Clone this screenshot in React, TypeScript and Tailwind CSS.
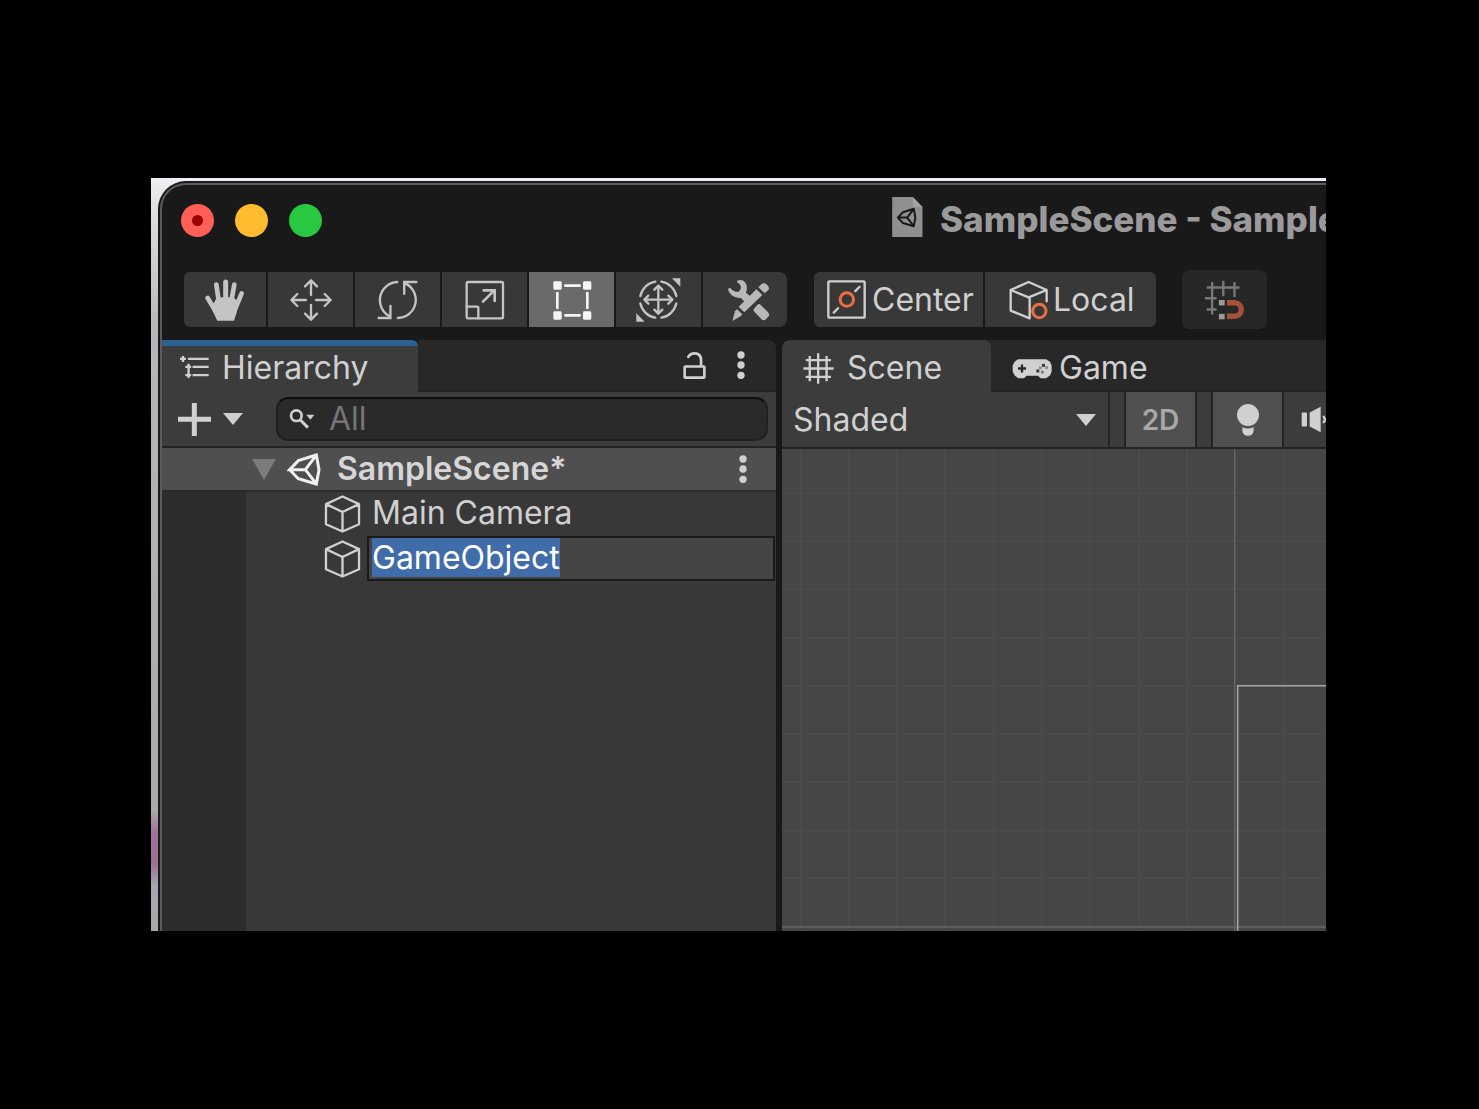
import { useEffect, useRef, type ReactNode } from "react";

type IconProps = { box: string; className: string; children: ReactNode };

function Icon({ box, className, children }: IconProps) {
  return (
    <svg
      viewBox={box}
      className={`shrink-0 ${className}`}
      fill="none"
      stroke="currentColor"
      strokeLinecap="round"
      strokeLinejoin="round"
      strokeWidth={7}
      aria-hidden="true"
    >
      {children}
    </svg>
  );
}

function HandIcon() {
  return (
    <Icon box="180 318 120 132" className="h-[44px] w-[40px]">
      <g strokeWidth={14}>
        <path d="M188 378 L210 415" />
        <path d="M214 338 L222 392" />
        <path d="M242 330 V392" strokeWidth={15} />
        <path d="M268 338 L258 392" />
        <path d="M290 364 L273 405" />
      </g>
      <path
        d="M194 394 L206 394 L216 376 H266 L282 394 Q276 422 267 446 H217 Q206 426 194 394 Z"
        fill="currentColor"
        stroke="none"
      />
    </Icon>
  );
}

function MoveIcon() {
  return (
    <Icon box="434 322 132 132" className="size-[44px]">
      <path d="M500 373 V329 M482 347 L500 329 L518 347" />
      <path d="M500 403 V447 M482 429 L500 447 L518 429" />
      <path d="M485 388 H441 M459 370 L441 388 L459 406" />
      <path d="M515 388 H559 M541 370 L559 388 L541 406" />
    </Icon>
  );
}

function RotateIcon() {
  return (
    <Icon box="700 326 122 122" className="size-[41px]">
      <path d="M760 335 A54 54 0 0 0 738 437" />
      <path d="M762 442 A54 54 0 0 0 784 339" />
      <path d="M817 335 H781 V370" strokeLinejoin="miter" />
      <path d="M705 442 H740 V406" strokeLinejoin="miter" />
    </Icon>
  );
}

function ScaleIcon() {
  return (
    <Icon box="77 59 120 120" className="size-[40px]">
      <rect x="82" y="65" width="109" height="109" rx="4" />
      <path d="M82 139 H114 Q117 139 117 142 V174" />
      <path d="M131 124 L165 90" strokeWidth={8} />
      <path d="M133 90 H166 V122" strokeWidth={8} strokeLinejoin="miter" />
    </Icon>
  );
}

function RectIcon() {
  return (
    <Icon box="336 57 120 120" className="size-[40px]">
      <g fill="currentColor" stroke="none">
        <rect x="340" y="61" width="25" height="25" rx="4" />
        <rect x="429" y="61" width="25" height="25" rx="4" />
        <rect x="340" y="151" width="25" height="25" rx="4" />
        <rect x="429" y="151" width="25" height="25" rx="4" />
      </g>
      <path
        d="M376 74 H419 M376 163 H419 M352 96 V141 M442 96 V141"
        strokeWidth={8}
      />
    </Icon>
  );
}

function TransformIcon() {
  return (
    <Icon box="588 50 141 138" className="h-[46px] w-[47px]">
      <path d="M649 64 A55 55 0 0 0 604 107 M667 64 A55 55 0 0 1 712 107 M649 172 A55 55 0 0 1 604 129 M667 172 A55 55 0 0 0 712 129" />
      <path d="M618 118 H698 M658 78 V158" />
      <path d="M646 88 L658 76 L670 88 M646 148 L658 160 L670 148 M628 106 L616 118 L628 130 M688 106 L700 118 L688 130" />
      <g fill="currentColor" stroke="none">
        <path d="M699 54 H724 V79 Z" />
        <path d="M592 159 V184 H617 Z" />
      </g>
    </Icon>
  );
}

function ToolsIcon() {
  return (
    <Icon box="855 52 132 132" className="size-[44px]">
      <g fill="currentColor" stroke="none">
        <path d="M889 60 Q898 56 907 60 Q918 68 918 84 L915 96 Q924 103 931 110 L914 126 L900 112 Q884 114 872 104 Q862 96 861 84 L868 82 Q873 91 884 93 L893 93 Q902 84 899 76 Q896 68 888 65 Z" />
        <path d="M938 145 L952 130 Q956 129 960 134 L980 153 Q986 160 984 166 L972 178 Q965 180 960 174 L938 151 Z" />
        <path d="M893 138 L946 86 L964 103 L910 155 Z" />
        <path d="M952 80 L962 70 Q970 65 978 72 Q986 79 983 87 L971 98 Z" />
        <path d="M888 146 L904 161 L900 166 L874 181 L882 152 Z" />
      </g>
    </Icon>
  );
}

function CenterIcon() {
  return (
    <Icon box="82 330 116 116" className="size-[39px]">
      <rect x="86" y="334" width="108" height="108" rx="3" />
      <path d="M102 427 L115 414 M166 363 L179 350" strokeWidth={7} />
      <circle cx="141" cy="388" r="20" stroke="#ea6f47" strokeWidth={9} />
    </Icon>
  );
}

function LocalIcon() {
  return (
    <Icon box="628 328 120 120" className="size-[40px]">
      <path d="M741 392 V358 L687 334 L633 358 V420 L690 443 V380 M633 358 L687 380 L741 358" />
      <circle cx="719" cy="421" r="20" stroke="#ea6f47" strokeWidth={9} />
    </Icon>
  );
}

function SnapIcon() {
  return (
    <Icon box="376 330 118 118" className="size-[40px]">
      <g stroke="#787878" strokeLinecap="butt">
        <path d="M381 352 H478 M376 384 H410 M381 417 H410 M397 336 V432 M430 332 V378 M463 336 V380" />
      </g>
      <g fill="#9b9b9b" stroke="none">
        <rect x="417" y="389" width="17" height="16" />
        <rect x="417" y="430" width="17" height="16" />
      </g>
      <path
        d="M441 397 H463 A20 20 0 0 1 463 437 H441"
        stroke="#a4523a"
        strokeWidth={16}
        strokeLinecap="butt"
      />
    </Icon>
  );
}

const logoPath =
  "M465 88 H418 L444 61 L498 44 L506 88 L498 131 L444 115 L418 88 M465 88 L497 46 M465 88 L497 129";

function FileIcon() {
  return (
    <Icon box="275 81 92 120" className="h-[40px] w-[31px]">
      <path d="M275 83 Q275 81 277 81 H337 L366 111 V201 H275 Z" fill="#8f8f8f" stroke="none" />
      <path d="M337 81 L366 111 H341 Q337 111 337 107 Z" fill="#a4a4a4" stroke="none" />
      <g transform="translate(41 90) scale(0.6)" stroke="#191919" strokeWidth={10}>
        <path d={logoPath} />
      </g>
    </Icon>
  );
}

function LogoIcon() {
  return (
    <Icon box="410 38 102 99" className="h-[33px] w-[34px] text-[#f0f0f0]">
      <path d={logoPath} strokeWidth={9} strokeLinejoin="miter" />
    </Icon>
  );
}

function HierarchyIcon() {
  return (
    <Icon box="86 54 92 76" className="h-[25px] w-[31px]">
      <path
        d="M112 69 H175 M126 93 H175 M126 118 H175 M88 69 H106 M97 60 V78 M104 93 H122 M104 118 H122 M114 84 V127"
        strokeLinecap="butt"
      />
      <circle cx="97" cy="69" r="2" />
      <circle cx="114" cy="93" r="2" />
      <circle cx="114" cy="118" r="2" />
    </Icon>
  );
}

function DownArrow() {
  return (
    <Icon box="219 236 60 36" className="h-[12px] w-[20px]">
      <path d="M219 236 H279 L249 272 Z" fill="currentColor" stroke="none" />
    </Icon>
  );
}

function PlusIcon() {
  return (
    <Icon box="85 202 99 99" className="size-[33px]">
      <path d="M85 251 H184 M134 202 V301" strokeWidth={15} strokeLinecap="butt" />
    </Icon>
  );
}

function SearchIcon() {
  return (
    <Icon box="417 226 78 60" className="h-[20px] w-[26px]">
      <circle cx="439" cy="246" r="16" strokeWidth={8} />
      <path d="M451 259 L474 282" strokeWidth={9} strokeLinecap="butt" />
      <path d="M469 243 H493 L481 258 Z" fill="currentColor" stroke="none" />
    </Icon>
  );
}

function LockIcon() {
  return (
    <Icon box="639 46 70 86" className="h-[29px] w-[23px]">
      <rect x="644" y="92" width="60" height="34" rx="2" strokeWidth={8} />
      <path d="M655 63 Q661 52 674 52 Q694 52 694 73 V90" strokeWidth={8} />
    </Icon>
  );
}

function DotsIcon() {
  return (
    <Icon box="801 47 24 84" className="h-[28px] w-[8px]">
      <g fill="currentColor" stroke="none">
        <circle cx="813" cy="59" r="11" />
        <circle cx="813" cy="89" r="11" />
        <circle cx="813" cy="120" r="11" />
      </g>
    </Icon>
  );
}

function GridIcon() {
  return (
    <Icon box="85 47 92 92" className="size-[31px]">
      <path
        d="M105 56 V131 M130 48 V138 M155 56 V131 M93 68 H168 M86 93 H176 M93 118 H168"
        strokeLinecap="butt"
      />
    </Icon>
  );
}

function GamepadIcon() {
  return (
    <Icon box="710 70 120 62" className="h-[21px] w-[40px]">
      <path
        d="M728 73 H812 L824 81 L829 92 V110 L824 122 L812 130 H796 L788 123 H754 L746 130 H729 L718 122 L712 110 V92 L718 81 Z"
        fill="currentColor"
        stroke="none"
      />
      <g stroke="#282828">
        <path d="M728 101 H752 M740 89 V113" strokeLinecap="butt" />
      </g>
      <g fill="#3a3a3a" stroke="none">
        <rect x="800" y="87" width="9" height="9" />
        <rect x="783" y="104" width="9" height="9" />
        <rect x="810" y="94" width="8" height="8" fill="#8a8a8a" />
        <rect x="791" y="95" width="8" height="8" fill="#8a8a8a" />
        <rect x="797" y="108" width="8" height="8" fill="#777777" />
      </g>
    </Icon>
  );
}

function BulbIcon() {
  return (
    <Icon box="710 203 66 96" className="h-[32px] w-[22px]">
      <g fill="currentColor" stroke="none">
        <circle cx="743" cy="236" r="33" />
        <path d="M726 273 Q743 280 760 273 V283 Q758 298 743 298 Q728 298 726 283 Z" />
      </g>
    </Icon>
  );
}

function SpeakerIcon() {
  return (
    <Icon box="904 208 96 80" className="h-[27px] w-[32px]">
      <g fill="currentColor" stroke="none">
        <rect x="906" y="227" width="16" height="42" rx="3" />
        <path d="M930 227 L963 210 V286 L930 269 Z" />
      </g>
      <path d="M972 240 Q979 248 972 256" />
    </Icon>
  );
}

function CubeIcon() {
  return (
    <Icon box="523 166 112 114" className="h-[38px] w-[37px]">
      <path d="M579 170 L629 193 V254 L579 276 L529 254 V193 Z M529 193 L579 217 L629 193 M579 217 V276" />
    </Icon>
  );
}

const tools = [
  { name: "Hand", icon: <HandIcon />, shape: "w-[82px] rounded-l-md bg-[#383838]" },
  { name: "Move", icon: <MoveIcon />, shape: "w-[85px] bg-[#383838]" },
  { name: "Rotate", icon: <RotateIcon />, shape: "w-[85px] bg-[#383838]" },
  { name: "Scale", icon: <ScaleIcon />, shape: "w-[85px] bg-[#383838]" },
  { name: "Rect", icon: <RectIcon />, shape: "w-[85px] bg-[#6a6a6a] text-[#f5f5f5]" },
  { name: "Transform", icon: <TransformIcon />, shape: "w-[85px] bg-[#383838]" },
  { name: "Custom tools", icon: <ToolsIcon />, shape: "w-[84px] rounded-r-lg bg-[#383838] pl-[6px] text-[#b8b8b8]" },
];

function TitleBar() {
  return (
    <header className="flex h-[87px] items-start pl-[19px] pt-[12px]">
      <div className="flex shrink-0 gap-[21px] pt-[7px]">
        <button aria-label="Close" className="flex size-[33px] items-center justify-center rounded-full bg-[#ff5f57]">
          <span className="size-[11px] rounded-full bg-[#990000]" />
        </button>
        <button aria-label="Minimize" className="size-[33px] rounded-full bg-[#febc2e]" />
        <button aria-label="Zoom" className="size-[33px] rounded-full bg-[#28c840]" />
      </div>
      <div className="ml-[570px] flex shrink-0 items-start gap-[17px]">
        <FileIcon />
        <h1 className="whitespace-nowrap text-[35px] leading-[44px] font-extrabold text-[#9a9a9a]">
          SampleScene - Sample
        </h1>
      </div>
    </header>
  );
}

function Toolbar() {
  return (
    <div className="flex h-[68px] items-start pl-[22px]">
      <div className="flex shrink-0 gap-[2px] text-[#c4c4c4]">
        {tools.map((t) => (
          <button
            key={t.name}
            aria-label={t.name}
            className={`flex h-[55px] items-center justify-center ${t.shape}`}
          >
            {t.icon}
          </button>
        ))}
      </div>
      <div className="ml-[27px] flex shrink-0 gap-[2px] text-[32px]">
        <button className="flex h-[55px] w-[169px] items-center gap-[6px] rounded-l-md bg-[#383838] pl-[13px]">
          <CenterIcon />
          Center
        </button>
        <button className="flex h-[55px] w-[171px] items-center gap-[4px] rounded-r-md bg-[#383838] pl-[24px]">
          <LocalIcon />
          Local
        </button>
      </div>
      <button
        aria-label="Grid snapping"
        className="-mt-[2px] ml-[26px] flex h-[59px] w-[85px] shrink-0 items-center justify-center rounded-lg bg-[#272727]"
      >
        <SnapIcon />
      </button>
    </div>
  );
}

function HierarchyPanel() {
  const field = useRef<HTMLInputElement>(null);

  useEffect(() => {
    field.current?.focus();
    field.current?.select();
  }, []);

  return (
    <section aria-label="Hierarchy" className="flex w-[614px] shrink-0 flex-col bg-[#383838]">
      <div className="flex h-[52px] bg-[#191919]">
        <button
          role="tab"
          aria-selected="true"
          className="flex w-[256px] items-start gap-[12px] rounded-tr-md border-t-[6px] border-[#2d6093] bg-[#3c3c3c] pl-[17px] text-[32px] leading-[44px]"
        >
          <span className="pt-[8px]">
            <HierarchyIcon />
          </span>
          Hierarchy
        </button>
        <div className="flex flex-1 items-center justify-end gap-[31px] rounded-tr-lg border-b-2 border-[#232323] bg-[#282828] pr-[31px]">
          <button aria-label="Lock">
            <LockIcon />
          </button>
          <button aria-label="Panel menu">
            <DotsIcon />
          </button>
        </div>
      </div>
      <div className="flex h-[56px] items-center border-b-2 border-[#232323] bg-[#3c3c3c] pr-[8px] pl-[16px]">
        <button aria-label="Create" className="flex shrink-0 items-center gap-[12px]">
          <PlusIcon />
          <DownArrow />
        </button>
        <label className="ml-[33px] flex h-[44px] min-w-0 flex-1 items-center gap-[14px] rounded-xl border-2 border-[#202020] border-t-[#0d0d0d] bg-[#2a2a2a] px-[11px]">
          <SearchIcon />
          <input
            aria-label="Search"
            placeholder="All"
            className="min-w-0 flex-1 bg-transparent text-[32px] leading-[40px] outline-none placeholder:text-[#757575]"
          />
        </label>
      </div>
      <div className="flex h-[44px] items-center border-b-2 border-[#2b2b2b] bg-[#4f4f4f] pr-[29px] pl-[90px]">
        <button aria-label="Collapse scene" className="text-[#7b7b7b]">
          <Icon box="307 64 72 64" className="h-[21px] w-[24px]">
            <path d="M307 64 H379 L343 128 Z" fill="currentColor" stroke="none" />
          </Icon>
        </button>
        <span className="ml-[11px] flex flex-1 items-center gap-[16px] text-[32px] leading-[40px] font-semibold text-[#d6d6d6]">
          <LogoIcon />
          SampleScene*
        </span>
        <button aria-label="Scene menu">
          <DotsIcon />
        </button>
      </div>
      <div className="flex flex-1">
        <div className="w-[84px] shrink-0 bg-[#2d2d2d]" />
        <ul className="min-w-0 flex-1 text-[32px] leading-[40px]">
          <li className="flex h-[44px] items-center gap-[11px] pl-[78px]">
            <CubeIcon />
            <span className="pb-[2px]">Main Camera</span>
          </li>
          <li className="flex h-[45px] items-center gap-[6px] pr-px pl-[78px]">
            <CubeIcon />
            <input
              ref={field}
              aria-label="Object name"
              defaultValue="GameObject"
              className="h-[45px] min-w-0 flex-1 border-2 border-[#191919] bg-[#444444] px-[3px] pb-[2px] text-[32px] outline-none selection:bg-[rgba(65,108,171,0.99)] selection:text-white"
            />
          </li>
        </ul>
      </div>
    </section>
  );
}

const columns = [19, 67, 115, 163, 212, 260, 308, 357, 405, 502];
const rows = [44, 92, 140, 189, 237, 285, 333, 382, 429];

function SceneCanvas() {
  return (
    <div className="flex-1 overflow-hidden bg-[#464646]">
      <svg width="544" height="482" viewBox="0 0 544 482" role="img" aria-label="Scene view">
        <g stroke="#4a4a4a" strokeWidth="2">
          {columns.map((x) => (
            <line key={x} x1={x} x2={x} y1="0" y2="482" />
          ))}
          {rows.map((y) => (
            <line key={y} x1="0" x2="544" y1={y} y2={y} />
          ))}
        </g>
        <g stroke="#666666" strokeWidth="1.5">
          <line x1="452.7" x2="452.7" y1="0" y2="482" />
          <line x1="0" x2="544" y1="478" y2="478" />
        </g>
        <path d="M455.7 482 V236.7 H544" fill="none" stroke="#a6a6a6" strokeWidth="1.5" />
      </svg>
    </div>
  );
}

function ScenePanel() {
  return (
    <section aria-label="Scene" className="flex min-w-0 flex-1 flex-col overflow-hidden rounded-tl-lg bg-[#282828]">
      <div role="tablist" className="flex h-[52px] shrink-0 text-[32px] leading-[44px]">
        <button
          role="tab"
          aria-selected="true"
          className="flex w-[209px] items-center gap-[13px] rounded-t-lg bg-[#3c3c3c] pt-[4px] pl-[21px]"
        >
          <GridIcon />
          Scene
        </button>
        <button
          role="tab"
          aria-selected="false"
          className="flex flex-1 items-center gap-[7px] border-b-2 border-[#232323] pt-[6px] pl-[21px]"
        >
          <GamepadIcon />
          Game
        </button>
      </div>
      <div className="flex h-[57px] shrink-0 gap-[2px] border-b-2 border-[#232323] bg-[#232323]">
        <div className="grid w-[326px] shrink-0 items-center bg-[#3c3c3c]">
          <select
            aria-label="Draw mode"
            className="col-start-1 row-start-1 h-full appearance-none bg-transparent pl-[11px] text-[32px] outline-none"
          >
            <option>Shaded</option>
          </select>
          <span className="pointer-events-none col-start-1 row-start-1 mr-[12px] justify-self-end">
            <DownArrow />
          </span>
        </div>
        <div className="w-[14px] shrink-0 bg-[#3c3c3c]" />
        <button className="w-[69px] shrink-0 bg-[#505050] text-[28px] font-semibold text-[#a8a8a8]">2D</button>
        <div className="w-[14px] shrink-0 bg-[#3c3c3c]" />
        <button aria-label="Scene lighting" className="flex w-[69px] shrink-0 items-center justify-center bg-[#505050]">
          <BulbIcon />
        </button>
        <button aria-label="Scene audio" className="flex flex-1 items-center overflow-hidden bg-[#3c3c3c] pl-[17px]">
          <SpeakerIcon />
        </button>
      </div>
      <SceneCanvas />
    </section>
  );
}

export default function App() {
  return (
    <main className="flex min-h-screen bg-black pt-[178px] pr-[153px] pb-[178px] pl-[151px] font-['Inter',sans-serif] text-[#d0d0d0]">
      <div className="flex min-w-0 flex-1 overflow-hidden bg-[linear-gradient(to_bottom,#eef1f3_0%,#e4e4e4_3%,#b8b5ba_20%,#a9a9a9_84%,#a0709a_87%,#9a7095_91%,#a6a6b0_94%,#a8a8a8_100%)] pt-[3px] pl-[7px]">
        <div className="flex min-w-0 flex-1 rounded-tl-[28px] bg-[#1c1c1c] pt-[2px] pl-[2px]">
          <div className="flex min-w-0 flex-1 flex-col overflow-hidden rounded-tl-[26px] border-t-2 border-l-2 border-[#5c5c5c] bg-[#191919]">
            <TitleBar />
            <Toolbar />
            <div className="flex flex-1 gap-[6px]">
              <HierarchyPanel />
              <ScenePanel />
            </div>
          </div>
        </div>
      </div>
    </main>
  );
}
